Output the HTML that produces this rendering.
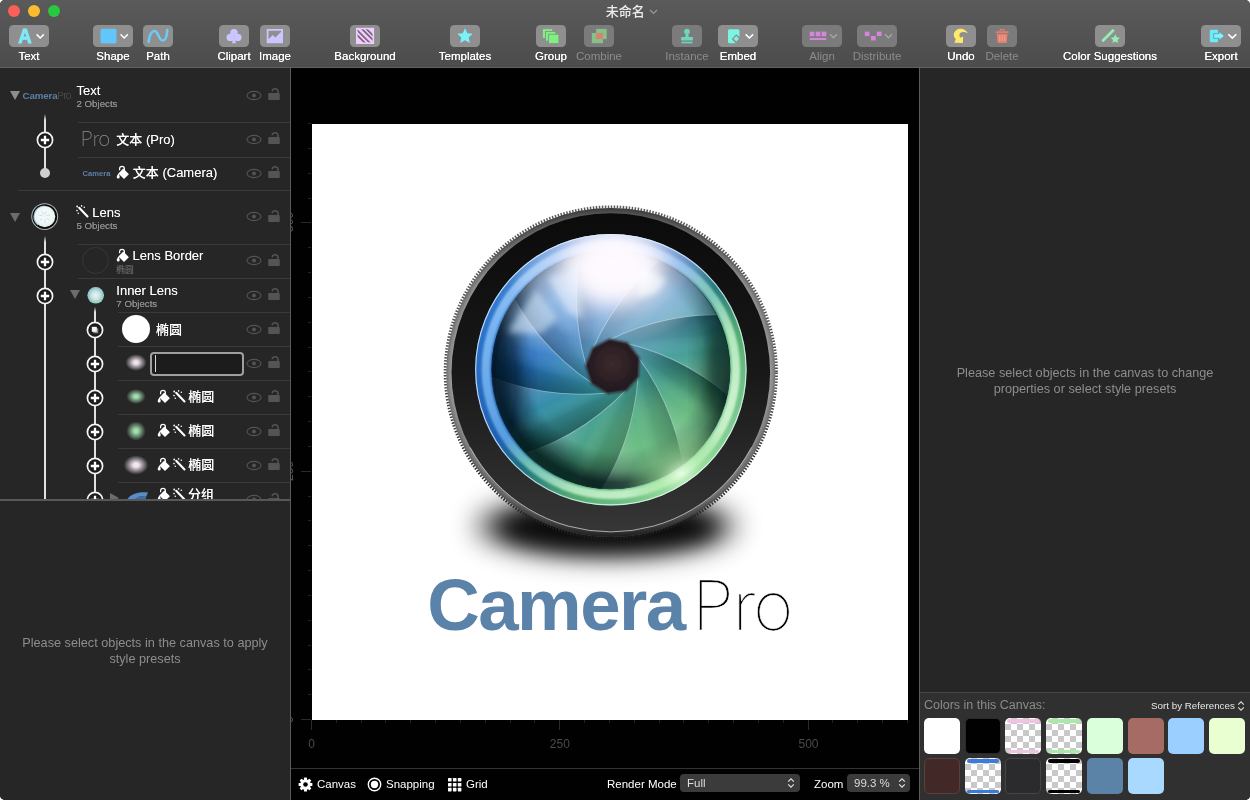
<!DOCTYPE html>
<html lang="zh">
<head>
<meta charset="utf-8">
<title>未命名</title>
<style>
*{box-sizing:border-box;margin:0;padding:0}
html,body{width:1250px;height:800px;overflow:hidden;background:#fff}
body{font-family:"Liberation Sans","Noto Sans CJK SC",sans-serif;font-size:12px;color:#fff;position:relative;-webkit-font-smoothing:antialiased}
.abs{position:absolute}
#win{position:absolute;left:0;top:0;width:1250px;height:800px;overflow:hidden;background:#000;border-radius:5px;opacity:.999}
/* toolbar */
#tb{position:absolute;left:0;top:0;width:1250px;height:67px;background:linear-gradient(#5a5a5a,#4c4c4c)}
#tbline{position:absolute;left:0;top:66.8px;width:1250px;height:1.1px;background:#606060}
.tl{position:absolute;top:5px;width:12px;height:12px;border-radius:50%}
.btn{position:absolute;top:25px;height:22px;border-radius:4.5px;background:#8f8f8f}
.btn.dis{background:#7b7b7b}
.lbl{position:absolute;top:49px;height:14px;line-height:14px;font-size:11.5px;color:#fff;text-align:center;white-space:nowrap;transform:translateX(-50%);text-shadow:0 0 .4px #fff}
.lbl.dis{color:#8c8c8c;text-shadow:none}
.btn svg{position:absolute;left:0;top:0}
#title{position:absolute;left:0;width:1250px;top:3px;height:18px;line-height:18px;text-align:center;font-size:13px;color:#ececec;padding-left:14px;font-weight:500}
/* left panel */
#left{position:absolute;left:0;top:68px;width:290px;height:732px;background:#262626}
#leftb{position:absolute;left:290px;top:68px;width:1px;height:732px;background:#5b5b5b}
#layers{position:absolute;left:0;top:0;width:290px;height:431px;overflow:hidden}
#ldiv{position:absolute;left:0;top:431.2px;width:290px;height:1.6px;background:#585858}
.sep{position:absolute;height:1px;background:#3a3a3a;right:0}
.t1{position:absolute;font-size:13px;line-height:16px;color:#fff;white-space:nowrap;font-weight:500;text-shadow:0 0 .5px rgba(255,255,255,.55)}
.t2{position:absolute;font-size:9.7px;line-height:11px;color:#8e8e8e;white-space:nowrap;text-shadow:0 0 .3px #8e8e8e}
.msg{position:absolute;color:#8d8d8d;font-size:12.7px;line-height:16px;text-align:center;white-space:nowrap}
/* canvas */
#cv{position:absolute;left:291px;top:68px;width:628px;height:732px;background:#000}
#paper{position:absolute;left:311.5px;top:123.5px;width:596px;height:596px;background:#fff;overflow:hidden}
#bbar{position:absolute;left:291px;top:768px;width:628px;height:1px;background:#333}
.bt{position:absolute;top:777px;height:15px;line-height:15px;font-size:11.5px;color:#fff;white-space:nowrap}
.rl{position:absolute;top:737px;height:15px;line-height:15px;font-size:12px;color:#4a4a4a;transform:translateX(-50%)}
.sel{position:absolute;top:774px;height:18px;border-radius:4px;background:#3b3b3b;color:#ddd;font-size:11.5px;line-height:18px}
/* right */
#right{position:absolute;left:920px;top:68px;width:330px;height:732px;background:#262626}
#rightb{position:absolute;left:919px;top:68px;width:1px;height:732px;background:#5b5b5b}
#colors{position:absolute;left:920px;top:692px;width:330px;height:108px;background:#303030;border-top:1px solid #484848}
.sw{position:absolute;width:36px;height:36px;border-radius:5px;overflow:hidden}
.chk{background-color:#fff;background-image:conic-gradient(#c9c9c9 25%,#fff 0 50%,#c9c9c9 0 75%,#fff 0);background-size:12px 12px;background-position:0 0}
</style>
</head>
<body>
<div id="win">
<!--TOOLBAR-->
<div id="tb">
<div class="tl" style="left:8px;background:#fc5f57"></div>
<div class="tl" style="left:28px;background:#fdbc2e"></div>
<div class="tl" style="left:48px;background:#28c840"></div>
<div id="title">未命名 <svg width="9" height="6" viewBox="0 0 9 6" style="vertical-align:1px;margin-left:1px"><path d="M1 1l3.5 3.5L8 1" fill="none" stroke="#9a9a9a" stroke-width="1.2"/></svg></div>

<div class="btn" style="left:9px;width:40px"><svg width="40" height="22"><text transform="translate(16 17.800) scale(.9 1.020)" x="0" y="0" font-family="Liberation Sans,sans-serif" font-weight="bold" font-size="20.600" text-anchor="middle" fill="#7eeaf6" stroke="#7eeaf6" stroke-width=".9" stroke-linejoin="round">A</text><path d="M27.6 9.4l3.6 3.6 3.6-3.6" fill="none" stroke="#fff" stroke-width="1.5"/></svg></div>
<div class="lbl" style="left:29px">Text</div>

<div class="btn" style="left:93px;width:40px"><svg width="40" height="22"><rect x="7.5" y="3.8" width="16" height="14.6" rx="1.5" fill="#62c6fb"/><path d="M27.6 9.4l3.6 3.6 3.6-3.6" fill="none" stroke="#fff" stroke-width="1.5"/></svg></div>
<div class="lbl" style="left:113px">Shape</div>

<div class="btn" style="left:143px;width:30px"><svg width="30" height="22"><path d="M5.6 17c.8-6 3-11 6-11 3.600 0 4 9.500 8 9.500 3 0 4.400-4.500 4.600-10.500" fill="none" stroke="#6ccaf6" stroke-width="2.600" stroke-linecap="round"/></svg></div>
<div class="lbl" style="left:158px">Path</div>

<div class="btn" style="left:219px;width:30px"><svg width="30" height="22"><g fill="#cbc6ff"><circle cx="15" cy="7.600" r="3.700"/><circle cx="11.200" cy="12.400" r="3.700"/><circle cx="18.800" cy="12.400" r="3.700"/><path d="M15 10l2 8.200h-4z"/></g></svg></div>
<div class="lbl" style="left:234px">Clipart</div>

<div class="btn" style="left:260px;width:30px"><svg width="30" height="22"><path d="M6.700 3.900h16.300v14.300h-16.300zM8.500 5.700v8.500l4.300-4.300 2.600 2.600 5.800-5.800v-1z" fill="#cbc6ff" fill-rule="evenodd"/></svg></div>
<div class="lbl" style="left:275px">Image</div>

<div class="btn" style="left:350px;width:30px"><svg width="30" height="22"><defs><clipPath id="bgc"><rect x="6.800" y="3.600" width="16.500" height="14.600"/></clipPath></defs><rect x="6.800" y="3.600" width="16.500" height="14.600" fill="#f1cdfb"/><g clip-path="url(#bgc)" stroke="#75657c" stroke-width="1.700"><path d="M9 1l16 16M5 3l16 16M13.500 1l12 12M4.500 7.500l13 13"/></g><rect x="6.800" y="3.600" width="16.500" height="14.600" fill="none" stroke="#f1cdfb" stroke-width="1.600"/></svg></div>
<div class="lbl" style="left:365px">Background</div>

<div class="btn" style="left:450px;width:30px"><svg width="30" height="22"><path d="M15 3.200l2.300 5 5.400.6-4 3.700 1.100 5.400-4.800-2.700-4.800 2.700 1.100-5.400-4-3.700 5.400-.6z" fill="#7af2fb"/></svg></div>
<div class="lbl" style="left:465px">Templates</div>

<div class="btn" style="left:536px;width:30px"><svg width="30" height="22"><g fill="#7ef27e" stroke="#8f8f8f" stroke-width=".9"><rect x="6.400" y="3.700" width="10.300" height="9.600"/><rect x="9.500" y="6.500" width="10.300" height="9.600"/><rect x="12.600" y="9.200" width="10.300" height="9.400"/></g></svg></div>
<div class="lbl" style="left:551px">Group</div>

<div class="btn dis" style="left:584px;width:30px"><svg width="30" height="22"><rect x="7.800" y="8" width="11.200" height="10.200" fill="#86c288"/><rect x="12.200" y="3.900" width="10.500" height="10.200" fill="#86c288"/><rect x="12.200" y="8" width="6.800" height="6.100" fill="#d98272"/></svg></div>
<div class="lbl dis" style="left:599px">Combine</div>

<div class="btn dis" style="left:672px;width:30px"><svg width="30" height="22"><g fill="#6fd5bd"><circle cx="15" cy="6.600" r="2.900"/><path d="M13.700 8h2.600l.5 4.500h-3.600z"/><rect x="9" y="12" width="12" height="3.600" rx="1"/><rect x="9.500" y="16.700" width="11" height="1.600"/></g></svg></div>
<div class="lbl dis" style="left:687px">Instance</div>

<div class="btn" style="left:718px;width:40px"><svg width="40" height="22"><path d="M11.500 4.200h8.500a1.500 1.500 0 0 1 1.500 1.500v6.300l-3.200-2.700-4.600 4.600 4 4.300h-6.200a1.500 1.500 0 0 1-1.500-1.500v-11a1.500 1.500 0 0 1 1.500-1.500z" fill="#7cf4e2"/><path d="M18.300 11.100l2.700 2.700-2.700 2.700-2.700-2.700z" fill="#7cf4e2"/><path d="M27.700 9.400l3.700 3.600 3.700-3.600" fill="none" stroke="#fff" stroke-width="1.500"/></svg></div>
<div class="lbl" style="left:738px">Embed</div>

<div class="btn dis" style="left:802px;width:40px"><svg width="40" height="22"><g fill="#d386dc"><rect x="7.700" y="6.600" width="4.700" height="4.700"/><rect x="13.700" y="6.600" width="4.700" height="4.700"/><rect x="19.600" y="6.600" width="4.700" height="4.700"/><rect x="7.700" y="13" width="16.600" height="2"/></g><path d="M28 9.300l3.500 3.500 3.500-3.500" fill="none" stroke="#a6a6a6" stroke-width="1.300"/></svg></div>
<div class="lbl dis" style="left:822px">Align</div>

<div class="btn dis" style="left:857px;width:40px"><svg width="40" height="22"><g fill="#d386dc"><rect x="7.800" y="6.600" width="4.700" height="4.500"/><rect x="14" y="11" width="4.700" height="4.500"/><rect x="19.800" y="6.600" width="4.700" height="4.500"/></g><path d="M28 9.300l3.500 3.500 3.500-3.500" fill="none" stroke="#a6a6a6" stroke-width="1.300"/></svg></div>
<div class="lbl dis" style="left:877px">Distribute</div>

<div class="btn" style="left:946px;width:30px"><svg width="30" height="22"><path d="M21.9 8.400C20.800 6 18.500 4.200 15.500 3.700C12 3.300 8.800 5.500 8 8.500C7.500 10.500 8 12.600 9.800 14.100L8.400 17.700L16.800 18L17.200 11.400L14.200 12.800C13 11 13 8.800 14.800 7.600C16.800 6.400 19.800 7 21.900 8.400Z" fill="#ffe96b"/></svg></div>
<div class="lbl" style="left:961px">Undo</div>

<div class="btn dis" style="left:987px;width:30px"><svg width="30" height="22"><g fill="#e37f6e"><rect x="8.8" y="6.3" width="12.7" height="1.9" rx=".5"/><path d="M12.6 6.300V5a1 1 0 0 1 1-1h3a1 1 0 0 1 1 1v1.300h-1.200v-1.100h-2.600v1.100z"/><path d="M9.800 9h10.700l-.6 8.200a.8.800 0 0 1-.8.700h-7.900a.8.800 0 0 1-.8-.7z"/></g><g stroke="#ee9c8d" stroke-width="1.300"><path d="M12.700 10.300v6M15.150 10.300v6M17.600 10.300v6"/></g></svg></div>
<div class="lbl dis" style="left:1002px">Delete</div>

<div class="btn" style="left:1095px;width:30px"><svg width="30" height="22"><path d="M7.300 16.200L18.800 4.800" stroke="#93f1b3" stroke-width="2.700" fill="none"/><path d="M20.300 9.300l1.400 3 3.200.4-2.400 2.200.7 3.200-2.900-1.600-2.900 1.600.7-3.200-2.400-2.200 3.200-.4z" fill="#93f1b3"/></svg></div>
<div class="lbl" style="left:1110px">Color Suggestions</div>

<div class="btn" style="left:1201px;width:40px"><svg width="40" height="22"><path d="M9.800 4.800h6.400a.8.800 0 0 1 .8.800v2.600h-4.600v5.400h4.600v2.800a.8.800 0 0 1-.8.800h-6.400a1 1 0 0 1-1-1v-10.400a1 1 0 0 1 1-1z" fill="#6ceafa"/><path d="M12.900 8.700h5.300v-2l5 4.200-5 4.200v-2h-5.300z" fill="#86f2fc" stroke="#3fa6b4" stroke-width=".5"/><path d="M27.300 9.200l4 3.900 4-3.900" fill="none" stroke="#fff" stroke-width="1.600"/></svg></div>
<div class="lbl" style="left:1221px">Export</div>
</div>
<div id="tbline"></div>
<!--/TOOLBAR-->
<!--LEFT-->
<div id="left"><div id="layers">
<div class="abs" style="left:44px;top:46px;width:2px;height:59px;background:linear-gradient(rgba(225,225,225,0),#e1e1e1 6px)"></div>
<div class="abs" style="left:44px;top:168px;width:2px;height:270px;background:linear-gradient(rgba(225,225,225,0),#e1e1e1 6px)"></div>
<div class="abs" style="left:94px;top:239px;width:2px;height:200px;background:linear-gradient(rgba(225,225,225,0),#e1e1e1 5px)"></div>
<svg class="abs" style="left:10px;top:22.7px" width="10" height="9"><path d="M0 0h10l-5 9z" fill="#8d8d8d"/></svg>
<div class="abs" style="left:22.500px;top:21px;font-size:9.700px;line-height:12px;white-space:nowrap;font-weight:bold;color:#5d80a5;letter-spacing:-.1px">Camera<span style="font-family:'Noto Sans CJK SC','Liberation Sans',sans-serif;font-weight:100;color:#7a7a7a;letter-spacing:-.3px">Pro</span></div>
<div class="t1" style="left:76.5px;top:15.1px">Text</div>
<div class="t2" style="left:76.5px;top:29.8px;">2 Objects</div>
<svg class="abs" style="left:246px;top:21.5px" width="16" height="11"><ellipse cx="8" cy="5.5" rx="7" ry="4.1" fill="none" stroke="#545454" stroke-width="1.1"/><circle cx="8" cy="5.5" r="1.9" fill="#545454"/></svg>
<svg class="abs" style="left:267px;top:19.0px" width="14" height="14"><rect x="1.2" y="6" width="11.6" height="7" rx="1" fill="#545454"/><path d="M5.2 4.300C5.200 .8 11 .8 11 4.300V6.500" fill="none" stroke="#545454" stroke-width="1.500"/></svg>
<div class="sep" style="top:54.0px;left:78px"></div>
<svg class="abs" style="left:35px;top:62.0px" width="20" height="20"><circle cx="10" cy="10" r="7.600" fill="#1b1b1b" stroke="#f4f4f4" stroke-width="1.700"/><path d="M10 5.800v8.400M5.800 10h8.400" stroke="#fff" stroke-width="2.300"/></svg>
<div class="abs" style="left:80.500px;top:57px;font-family:'Noto Sans CJK SC','Liberation Sans',sans-serif;font-weight:100;font-size:20.500px;line-height:24px;color:#8a8a8a;letter-spacing:-.6px">Pro</div>
<div class="t1" style="left:116.3px;top:63.5px">文本 (Pro)</div>
<svg class="abs" style="left:246px;top:65.7px" width="16" height="11"><ellipse cx="8" cy="5.5" rx="7" ry="4.1" fill="none" stroke="#545454" stroke-width="1.1"/><circle cx="8" cy="5.5" r="1.9" fill="#545454"/></svg>
<svg class="abs" style="left:267px;top:63.2px" width="14" height="14"><rect x="1.2" y="6" width="11.6" height="7" rx="1" fill="#545454"/><path d="M5.2 4.300C5.200 .8 11 .8 11 4.300V6.500" fill="none" stroke="#545454" stroke-width="1.500"/></svg>
<div class="sep" style="top:88.5px;left:78px"></div>
<div class="abs" style="left:42.500px;top:102.400px;width:5px;height:5px"></div>
<div class="abs" style="left:39.700px;top:99.600px;width:10.600px;height:10.600px;border-radius:50%;background:#cfcfcf"></div>
<div class="abs" style="left:82.500px;top:100.500px;font-size:7.600px;line-height:10px;font-weight:bold;color:#5d80a5;white-space:nowrap">Camera</div>
<svg class="abs" style="left:116.3px;top:96.8px" width="14" height="15" viewBox="0 0 14 15"><path d="M3.600 5.300V3.800a2.400 2.400 0 0 1 4.800 0v1.200" fill="none" stroke="#fff" stroke-width="1.200"/><path d="M7.300 3.600l5.600 5.600-4.900 4.900-5.600-5.600z" fill="#fff"/><path d="M2.700 8.200c-1 1.500-2 2.700-2 3.700a1.500 1.500 0 0 0 3 0c0-1-.6-2.200-1-3.700z" fill="#fff"/></svg>
<div class="t1" style="left:132.8px;top:97.2px">文本 (Camera)</div>
<svg class="abs" style="left:246px;top:99.5px" width="16" height="11"><ellipse cx="8" cy="5.5" rx="7" ry="4.1" fill="none" stroke="#545454" stroke-width="1.1"/><circle cx="8" cy="5.5" r="1.9" fill="#545454"/></svg>
<svg class="abs" style="left:267px;top:97.0px" width="14" height="14"><rect x="1.2" y="6" width="11.6" height="7" rx="1" fill="#545454"/><path d="M5.2 4.300C5.200 .8 11 .8 11 4.300V6.500" fill="none" stroke="#545454" stroke-width="1.500"/></svg>
<div class="sep" style="top:121.7px;left:18px"></div>
<svg class="abs" style="left:10.2px;top:144.5px" width="10" height="9"><path d="M0 0h10l-5 9z" fill="#6c6c6c"/></svg>
<svg class="abs" style="left:30px;top:134px" width="30" height="30" viewBox="0 0 30 30"><defs><radialGradient id="lt" cx=".5" cy=".45" r=".55"><stop offset="0" stop-color="#eaf2f6"/><stop offset=".3" stop-color="#f4fafc"/><stop offset=".8" stop-color="#eaf5f2"/><stop offset="1" stop-color="#d2ead8"/></radialGradient></defs><circle cx="14.700" cy="14.600" r="13.400" fill="#b4b4b4"/><circle cx="14.700" cy="14.600" r="12.400" fill="#080808"/><circle cx="14.700" cy="14.600" r="10.600" fill="url(#lt)"/><path d="M14.700 4A10.600 10.600 0 0 0 8.200 23" fill="none" stroke="#a9d3f4" stroke-opacity=".8" stroke-width="1.100"/><g stroke="#9fb9c6" stroke-opacity=".5" stroke-width=".9" fill="none"><path d="M14.700 12.200l1.600-2.600M17 13.600l2.900-.8M17 16.200l2.300 2M14.900 17.200l.2 3M12.400 16.400l-2.400 1.800M12 13.800l-3-.6M13.300 12.200l-1.300-2.600"/></g></svg>
<svg class="abs" style="left:76.3px;top:137.3px" width="13" height="13" viewBox="0 0 13 13"><path d="M3.200 2.800l8.300 8.600" stroke="#fff" stroke-width="2.100" stroke-linecap="round"/><g fill="#fff"><circle cx="1.200" cy="1.500" r=".9"/><circle cx="5.600" cy=".9" r=".8"/><circle cx="8.300" cy="2.300" r=".8"/><circle cx="1" cy="5.600" r=".8"/><circle cx="2.300" cy="8.200" r=".8"/></g></svg>
<div class="t1" style="left:92.3px;top:137.0px">Lens</div>
<div class="t2" style="left:76.5px;top:152.0px;">5 Objects</div>
<svg class="abs" style="left:246px;top:143.2px" width="16" height="11"><ellipse cx="8" cy="5.5" rx="7" ry="4.1" fill="none" stroke="#545454" stroke-width="1.1"/><circle cx="8" cy="5.5" r="1.9" fill="#545454"/></svg>
<svg class="abs" style="left:267px;top:140.7px" width="14" height="14"><rect x="1.2" y="6" width="11.6" height="7" rx="1" fill="#545454"/><path d="M5.2 4.300C5.200 .8 11 .8 11 4.300V6.500" fill="none" stroke="#545454" stroke-width="1.500"/></svg>
<div class="sep" style="top:176.0px;left:78px"></div>
<svg class="abs" style="left:35px;top:184.0px" width="20" height="20"><circle cx="10" cy="10" r="7.600" fill="#1b1b1b" stroke="#f4f4f4" stroke-width="1.700"/><path d="M10 5.800v8.400M5.800 10h8.400" stroke="#fff" stroke-width="2.300"/></svg>
<div class="abs" style="left:82.300px;top:179.400px;width:27px;height:27px;border-radius:50%;border:1px solid #383838"></div>
<svg class="abs" style="left:116.3px;top:179.8px" width="14" height="15" viewBox="0 0 14 15"><path d="M3.600 5.300V3.800a2.400 2.400 0 0 1 4.800 0v1.200" fill="none" stroke="#fff" stroke-width="1.200"/><path d="M7.300 3.600l5.600 5.600-4.900 4.900-5.600-5.600z" fill="#fff"/><path d="M2.700 8.200c-1 1.500-2 2.700-2 3.700a1.500 1.500 0 0 0 3 0c0-1-.6-2.200-1-3.700z" fill="#fff"/></svg>
<div class="t1" style="left:132.6px;top:180.4px">Lens Border</div>
<div class="abs" style="left:116.300px;top:196.5px;font-size:8.800px;line-height:11px;color:#777">椭圆</div>
<svg class="abs" style="left:246px;top:187.3px" width="16" height="11"><ellipse cx="8" cy="5.5" rx="7" ry="4.1" fill="none" stroke="#545454" stroke-width="1.1"/><circle cx="8" cy="5.5" r="1.9" fill="#545454"/></svg>
<svg class="abs" style="left:267px;top:184.8px" width="14" height="14"><rect x="1.2" y="6" width="11.6" height="7" rx="1" fill="#545454"/><path d="M5.2 4.300C5.200 .8 11 .8 11 4.300V6.500" fill="none" stroke="#545454" stroke-width="1.500"/></svg>
<div class="sep" style="top:210.1px;left:78px"></div>
<svg class="abs" style="left:35px;top:218.0px" width="20" height="20"><circle cx="10" cy="10" r="7.600" fill="#1b1b1b" stroke="#f4f4f4" stroke-width="1.700"/><path d="M10 5.800v8.400M5.800 10h8.400" stroke="#fff" stroke-width="2.300"/></svg>
<svg class="abs" style="left:70.2px;top:222.4px" width="10" height="9"><path d="M0 0h10l-5 9z" fill="#6c6c6c"/></svg>
<svg class="abs" style="left:86px;top:217px" width="20" height="20" viewBox="0 0 20 20"><defs><radialGradient id="lt2" cx=".5" cy=".5" r=".5"><stop offset="0" stop-color="#e8f2f6"/><stop offset=".5" stop-color="#cfe6ea"/><stop offset=".85" stop-color="#a8d4c0"/><stop offset="1" stop-color="#8fc3e6"/></radialGradient><linearGradient id="lt3" x1="0" y1="0" x2="1" y2="1"><stop offset="0" stop-color="#8ab8f0"/><stop offset="1" stop-color="#a4e0a8"/></linearGradient></defs><circle cx="9.700" cy="10.300" r="8.300" fill="url(#lt3)"/><circle cx="9.700" cy="10.300" r="7.200" fill="url(#lt2)"/></svg>
<div class="t1" style="left:116.3px;top:215.4px">Inner Lens</div>
<div class="t2" style="left:116.3px;top:230.3px;">7 Objects</div>
<svg class="abs" style="left:246px;top:221.5px" width="16" height="11"><ellipse cx="8" cy="5.5" rx="7" ry="4.1" fill="none" stroke="#545454" stroke-width="1.1"/><circle cx="8" cy="5.5" r="1.9" fill="#545454"/></svg>
<svg class="abs" style="left:267px;top:219.0px" width="14" height="14"><rect x="1.2" y="6" width="11.6" height="7" rx="1" fill="#545454"/><path d="M5.2 4.300C5.200 .8 11 .8 11 4.300V6.500" fill="none" stroke="#545454" stroke-width="1.500"/></svg>
<div class="sep" style="top:243.9px;left:118px"></div>
<svg class="abs" style="left:85px;top:251.8px" width="20" height="20"><circle cx="10" cy="10" r="7.600" fill="#1b1b1b" stroke="#f4f4f4" stroke-width="1.700"/><rect x="8.300" y="8.300" width="5" height="5" fill="#8a8a8a"/><rect x="6.800" y="6.800" width="5" height="5" fill="#f4f4f4"/></svg>
<div class="abs" style="left:122px;top:247.200px;width:28px;height:28px;border-radius:50%;background:#fff"></div>
<div class="t1" style="left:156px;top:253.6px">椭圆</div>
<svg class="abs" style="left:246px;top:255.5px" width="16" height="11"><ellipse cx="8" cy="5.5" rx="7" ry="4.1" fill="none" stroke="#545454" stroke-width="1.1"/><circle cx="8" cy="5.5" r="1.9" fill="#545454"/></svg>
<svg class="abs" style="left:267px;top:253.0px" width="14" height="14"><rect x="1.2" y="6" width="11.6" height="7" rx="1" fill="#545454"/><path d="M5.2 4.300C5.200 .8 11 .8 11 4.300V6.500" fill="none" stroke="#545454" stroke-width="1.500"/></svg>
<div class="sep" style="top:278.1px;left:118px"></div>
<svg class="abs" style="left:85px;top:285.8px" width="20" height="20"><circle cx="10" cy="10" r="7.600" fill="#1b1b1b" stroke="#f4f4f4" stroke-width="1.700"/><path d="M10 5.800v8.400M5.800 10h8.400" stroke="#fff" stroke-width="2.300"/></svg>
<div class="abs" style="left:123.6px;top:285.3px;width:24px;height:19.0px;background:radial-gradient(closest-side,#efe2ec 0%,#efe2ec 18%,transparent 88%);opacity:1"></div>
<div class="abs" style="left:150.100px;top:284px;width:93.500px;height:24px;border:2.700px solid #a0a0a0;border-radius:4px;background:#1c1c1c"><div class="abs" style="left:2.600px;top:1.200px;width:1px;height:16.500px;background:#d8d8d8"></div></div>
<svg class="abs" style="left:246px;top:289.5px" width="16" height="11"><ellipse cx="8" cy="5.5" rx="7" ry="4.1" fill="none" stroke="#545454" stroke-width="1.1"/><circle cx="8" cy="5.5" r="1.9" fill="#545454"/></svg>
<svg class="abs" style="left:267px;top:287.0px" width="14" height="14"><rect x="1.2" y="6" width="11.6" height="7" rx="1" fill="#545454"/><path d="M5.2 4.300C5.200 .8 11 .8 11 4.300V6.500" fill="none" stroke="#545454" stroke-width="1.500"/></svg>
<div class="sep" style="top:311.9px;left:118px"></div>
<svg class="abs" style="left:85px;top:319.8px" width="20" height="20"><circle cx="10" cy="10" r="7.600" fill="#1b1b1b" stroke="#f4f4f4" stroke-width="1.700"/><path d="M10 5.800v8.400M5.800 10h8.400" stroke="#fff" stroke-width="2.300"/></svg>
<div class="abs" style="left:124.6px;top:320.3px;width:22px;height:17.0px;background:radial-gradient(closest-side,#9fdcae 0%,#9fdcae 18%,transparent 88%);opacity:1"></div>
<svg class="abs" style="left:156.6px;top:321.0px" width="14" height="15" viewBox="0 0 14 15"><path d="M3.600 5.300V3.800a2.400 2.400 0 0 1 4.800 0v1.200" fill="none" stroke="#fff" stroke-width="1.200"/><path d="M7.300 3.600l5.600 5.600-4.900 4.900-5.600-5.600z" fill="#fff"/><path d="M2.700 8.200c-1 1.500-2 2.700-2 3.700a1.500 1.500 0 0 0 3 0c0-1-.6-2.200-1-3.700z" fill="#fff"/></svg>
<svg class="abs" style="left:172.6px;top:322.3px" width="13" height="13" viewBox="0 0 13 13"><path d="M3.200 2.800l8.300 8.600" stroke="#fff" stroke-width="2.100" stroke-linecap="round"/><g fill="#fff"><circle cx="1.200" cy="1.500" r=".9"/><circle cx="5.600" cy=".9" r=".8"/><circle cx="8.300" cy="2.300" r=".8"/><circle cx="1" cy="5.600" r=".8"/><circle cx="2.300" cy="8.200" r=".8"/></g></svg>
<div class="t1" style="left:188.2px;top:321.4px">椭圆</div>
<svg class="abs" style="left:246px;top:323.5px" width="16" height="11"><ellipse cx="8" cy="5.5" rx="7" ry="4.1" fill="none" stroke="#545454" stroke-width="1.1"/><circle cx="8" cy="5.5" r="1.9" fill="#545454"/></svg>
<svg class="abs" style="left:267px;top:321.0px" width="14" height="14"><rect x="1.2" y="6" width="11.6" height="7" rx="1" fill="#545454"/><path d="M5.2 4.300C5.200 .8 11 .8 11 4.300V6.500" fill="none" stroke="#545454" stroke-width="1.500"/></svg>
<div class="sep" style="top:345.9px;left:118px"></div>
<svg class="abs" style="left:85px;top:353.7px" width="20" height="20"><circle cx="10" cy="10" r="7.600" fill="#1b1b1b" stroke="#f4f4f4" stroke-width="1.700"/><path d="M10 5.800v8.400M5.800 10h8.400" stroke="#fff" stroke-width="2.300"/></svg>
<div class="abs" style="left:124.6px;top:351.8px;width:22px;height:22px;background:radial-gradient(closest-side,#9fdcae 0%,#9fdcae 18%,transparent 88%);opacity:1"></div>
<svg class="abs" style="left:156.6px;top:354.9px" width="14" height="15" viewBox="0 0 14 15"><path d="M3.600 5.300V3.800a2.400 2.400 0 0 1 4.800 0v1.200" fill="none" stroke="#fff" stroke-width="1.200"/><path d="M7.300 3.600l5.600 5.600-4.900 4.900-5.600-5.600z" fill="#fff"/><path d="M2.700 8.200c-1 1.500-2 2.700-2 3.700a1.500 1.500 0 0 0 3 0c0-1-.6-2.200-1-3.700z" fill="#fff"/></svg>
<svg class="abs" style="left:172.6px;top:356.2px" width="13" height="13" viewBox="0 0 13 13"><path d="M3.200 2.800l8.300 8.600" stroke="#fff" stroke-width="2.100" stroke-linecap="round"/><g fill="#fff"><circle cx="1.200" cy="1.500" r=".9"/><circle cx="5.600" cy=".9" r=".8"/><circle cx="8.300" cy="2.300" r=".8"/><circle cx="1" cy="5.600" r=".8"/><circle cx="2.300" cy="8.200" r=".8"/></g></svg>
<div class="t1" style="left:188.2px;top:355.3px">椭圆</div>
<svg class="abs" style="left:246px;top:357.5px" width="16" height="11"><ellipse cx="8" cy="5.5" rx="7" ry="4.1" fill="none" stroke="#545454" stroke-width="1.1"/><circle cx="8" cy="5.5" r="1.9" fill="#545454"/></svg>
<svg class="abs" style="left:267px;top:355.0px" width="14" height="14"><rect x="1.2" y="6" width="11.6" height="7" rx="1" fill="#545454"/><path d="M5.2 4.300C5.200 .8 11 .8 11 4.300V6.500" fill="none" stroke="#545454" stroke-width="1.500"/></svg>
<div class="sep" style="top:379.8px;left:118px"></div>
<svg class="abs" style="left:85px;top:387.8px" width="20" height="20"><circle cx="10" cy="10" r="7.600" fill="#1b1b1b" stroke="#f4f4f4" stroke-width="1.700"/><path d="M10 5.800v8.400M5.800 10h8.400" stroke="#fff" stroke-width="2.300"/></svg>
<div class="abs" style="left:122px;top:386.0px;width:28px;height:22px;background:radial-gradient(closest-side,#f3e6f0 0%,#f3e6f0 18%,transparent 88%);opacity:1"></div>
<svg class="abs" style="left:156.6px;top:388.9px" width="14" height="15" viewBox="0 0 14 15"><path d="M3.600 5.300V3.800a2.400 2.400 0 0 1 4.800 0v1.200" fill="none" stroke="#fff" stroke-width="1.200"/><path d="M7.300 3.600l5.600 5.600-4.900 4.900-5.600-5.600z" fill="#fff"/><path d="M2.700 8.200c-1 1.500-2 2.700-2 3.700a1.500 1.500 0 0 0 3 0c0-1-.6-2.200-1-3.700z" fill="#fff"/></svg>
<svg class="abs" style="left:172.6px;top:390.2px" width="13" height="13" viewBox="0 0 13 13"><path d="M3.200 2.800l8.300 8.600" stroke="#fff" stroke-width="2.100" stroke-linecap="round"/><g fill="#fff"><circle cx="1.200" cy="1.500" r=".9"/><circle cx="5.600" cy=".9" r=".8"/><circle cx="8.300" cy="2.300" r=".8"/><circle cx="1" cy="5.600" r=".8"/><circle cx="2.300" cy="8.200" r=".8"/></g></svg>
<div class="t1" style="left:188.2px;top:389.3px">椭圆</div>
<svg class="abs" style="left:246px;top:391.5px" width="16" height="11"><ellipse cx="8" cy="5.5" rx="7" ry="4.1" fill="none" stroke="#545454" stroke-width="1.1"/><circle cx="8" cy="5.5" r="1.9" fill="#545454"/></svg>
<svg class="abs" style="left:267px;top:389.0px" width="14" height="14"><rect x="1.2" y="6" width="11.6" height="7" rx="1" fill="#545454"/><path d="M5.2 4.300C5.200 .8 11 .8 11 4.300V6.500" fill="none" stroke="#545454" stroke-width="1.500"/></svg>
<div class="sep" style="top:413.8px;left:118px"></div>
<svg class="abs" style="left:85px;top:421.6px" width="20" height="20"><circle cx="10" cy="10" r="7.600" fill="#1b1b1b" stroke="#f4f4f4" stroke-width="1.700"/><path d="M10 5.800v8.400M5.800 10h8.400" stroke="#fff" stroke-width="2.300"/></svg>
<svg class="abs" style="left:110px;top:425px" width="9" height="10"><path d="M0 0l9 5-9 5z" fill="#6c6c6c"/></svg>
<svg class="abs" style="left:126px;top:422px" width="24" height="16" viewBox="0 0 24 16"><path d="M1 9.500C5 4 12 1.500 22 2.500L20.500 6c-6-.5-9.500 1-12.500 4.500z" fill="#5a8cc8"/><path d="M8 10c3-3.500 6.500-4.500 12.500-4l-1 3.500c-4 0-6 1-8 3z" fill="#3f6ea8"/></svg>
<svg class="abs" style="left:156.6px;top:418.9px" width="14" height="15" viewBox="0 0 14 15"><path d="M3.600 5.300V3.800a2.400 2.400 0 0 1 4.800 0v1.200" fill="none" stroke="#fff" stroke-width="1.200"/><path d="M7.300 3.600l5.600 5.600-4.900 4.900-5.600-5.600z" fill="#fff"/><path d="M2.700 8.200c-1 1.500-2 2.700-2 3.700a1.500 1.500 0 0 0 3 0c0-1-.6-2.200-1-3.700z" fill="#fff"/></svg>
<svg class="abs" style="left:172.6px;top:420.2px" width="13" height="13" viewBox="0 0 13 13"><path d="M3.200 2.800l8.300 8.600" stroke="#fff" stroke-width="2.100" stroke-linecap="round"/><g fill="#fff"><circle cx="1.200" cy="1.500" r=".9"/><circle cx="5.600" cy=".9" r=".8"/><circle cx="8.300" cy="2.300" r=".8"/><circle cx="1" cy="5.600" r=".8"/><circle cx="2.300" cy="8.200" r=".8"/></g></svg>
<div class="t1" style="left:188px;top:419.3px">分组</div>
<svg class="abs" style="left:246px;top:426.3px" width="16" height="11"><ellipse cx="8" cy="5.5" rx="7" ry="4.1" fill="none" stroke="#545454" stroke-width="1.1"/><circle cx="8" cy="5.5" r="1.9" fill="#545454"/></svg>
<svg class="abs" style="left:267px;top:423.8px" width="14" height="14"><rect x="1.2" y="6" width="11.6" height="7" rx="1" fill="#545454"/><path d="M5.2 4.300C5.200 .8 11 .8 11 4.300V6.500" fill="none" stroke="#545454" stroke-width="1.500"/></svg>
</div>
<div id="ldiv"></div>
<div class="msg" style="left:0;width:290px;top:566.8px">Please select objects in the canvas to apply<br>style presets</div>
</div><div id="leftb"></div>
<!--/LEFT-->
<!--CANVAS-->
<div id="cv"></div>
<div id="paper">
<!--LENS-->
<svg class="abs" style="left:0;top:0" width="596" height="596" viewBox="0 0 596 596">
<defs>
<filter id="b1" x="-20%" y="-20%" width="140%" height="140%"><feGaussianBlur stdDeviation="1.2"/></filter>
<filter id="b3" x="-30%" y="-30%" width="160%" height="160%"><feGaussianBlur stdDeviation="3"/></filter>
<filter id="b6" x="-50%" y="-50%" width="200%" height="200%"><feGaussianBlur stdDeviation="6"/></filter>
<filter id="b10" x="-50%" y="-80%" width="200%" height="260%"><feGaussianBlur stdDeviation="10"/></filter>
<filter id="b14" x="-60%" y="-60%" width="220%" height="220%"><feGaussianBlur stdDeviation="14"/></filter>
<clipPath id="cg"><circle cx="298.85" cy="245.7" r="135.8"/></clipPath>
<clipPath id="ci"><circle cx="298.85" cy="245.7" r="119"/></clipPath>
<radialGradient id="band" gradientUnits="userSpaceOnUse" cx="298.8" cy="248.5" r="165"><stop offset=".962" stop-color="#a2a2a2"/><stop offset=".985" stop-color="#858585"/><stop offset="1" stop-color="#6c6c6c"/></radialGradient>
<linearGradient id="bandv" x1="0" y1="0" x2="0" y2="1"><stop offset="0" stop-color="#000" stop-opacity=".5"/><stop offset=".22" stop-color="#000" stop-opacity=".08"/><stop offset=".55" stop-color="#000" stop-opacity="0"/><stop offset=".88" stop-color="#000" stop-opacity=".25"/><stop offset="1" stop-color="#000" stop-opacity=".75"/></linearGradient>
<linearGradient id="barrel" x1="0" y1="0" x2="0" y2="1"><stop offset="0" stop-color="#0b0b0b"/><stop offset=".5" stop-color="#181818"/><stop offset="1" stop-color="#363636"/></linearGradient>
<linearGradient id="teeth" x1="0" y1="0" x2="0" y2="1"><stop offset="0" stop-color="#5a5a5a"/><stop offset=".5" stop-color="#4c4c4c"/><stop offset="1" stop-color="#1e1e1e"/></linearGradient>
<linearGradient id="gcol" x1=".2" y1=".05" x2=".8" y2=".95"><stop offset="0" stop-color="#4a92e4"/><stop offset=".3" stop-color="#2474c6"/><stop offset=".52" stop-color="#3696a4"/><stop offset=".78" stop-color="#56b07a"/><stop offset="1" stop-color="#78cc86"/></linearGradient>
<linearGradient id="rcol" x1=".13" y1=".13" x2=".87" y2=".87"><stop offset="0" stop-color="#2f78d0"/><stop offset=".4" stop-color="#1f60b0"/><stop offset=".52" stop-color="#1f7280"/><stop offset=".72" stop-color="#52aa70"/><stop offset="1" stop-color="#8ad49a"/></linearGradient>
<linearGradient id="rhi" x1=".13" y1=".13" x2=".87" y2=".87"><stop offset="0" stop-color="#8cc4fa"/><stop offset=".4" stop-color="#62a8ea"/><stop offset=".52" stop-color="#7ccac0"/><stop offset=".72" stop-color="#c0f0ca"/><stop offset="1" stop-color="#e4fee0"/></linearGradient>
<linearGradient id="bl" gradientUnits="userSpaceOnUse" x1="24" y1="70" x2="-42" y2="42"><stop offset="0" stop-color="#00101c" stop-opacity=".50"/><stop offset=".35" stop-color="#00101c" stop-opacity=".18"/><stop offset=".6" stop-color="#fff" stop-opacity=".02"/><stop offset="1" stop-color="#fff" stop-opacity=".26"/></linearGradient>
<radialGradient id="hole" cx=".5" cy=".45" r=".55"><stop offset="0" stop-color="#3b2a2d"/><stop offset=".6" stop-color="#2c2024"/><stop offset="1" stop-color="#1c1820"/></radialGradient>
<radialGradient id="wg" cx=".5" cy=".5" r=".5"><stop offset="0" stop-color="#fff" stop-opacity=".95"/><stop offset=".4" stop-color="#f6f2ff" stop-opacity=".7"/><stop offset=".75" stop-color="#eef0ff" stop-opacity=".3"/><stop offset="1" stop-color="#fff" stop-opacity="0"/></radialGradient>
<radialGradient id="gg" cx=".5" cy=".5" r=".5"><stop offset="0" stop-color="#e8ffe4" stop-opacity=".95"/><stop offset=".4" stop-color="#a8e8a0" stop-opacity=".55"/><stop offset="1" stop-color="#7fd080" stop-opacity="0"/></radialGradient>
<radialGradient id="vig" cx=".52" cy=".47" r=".5"><stop offset="0" stop-color="#021018" stop-opacity="0"/><stop offset=".74" stop-color="#021018" stop-opacity=".03"/><stop offset=".9" stop-color="#021018" stop-opacity=".38"/><stop offset="1" stop-color="#021018" stop-opacity=".8"/></radialGradient>
<path id="blade" d="M25.3 9.2A250 250 0 0 1 -8.4 125.7A126 126 0 0 1 -87.3 90.9A250 250 0 0 0 25.3 9.2Z"/>
<path id="bedge" d="M25.3 -9.2A250 250 0 0 1 -8.4 125.7"/>
</defs>
<ellipse cx="294" cy="402" rx="130" ry="31" fill="#000" opacity=".72" filter="url(#b14)"/>
<ellipse cx="296" cy="404" rx="108" ry="24" fill="#000" opacity=".85" filter="url(#b10)"/>
<circle cx="298.8" cy="248.5" r="165.6" fill="none" stroke="url(#teeth)" stroke-width="3" stroke-dasharray="1.5 1.5"/>
<circle cx="298.8" cy="248.5" r="164.6" fill="url(#band)"/>
<circle cx="298.8" cy="248.5" r="164.6" fill="url(#bandv)"/>
<circle cx="298.8" cy="248.5" r="159.3" fill="url(#barrel)"/>
<path d="M158.1 323.3A159.3 159.3 0 0 0 439.5 323.3" fill="none" stroke="#c8c8c8" stroke-width="1" stroke-opacity=".8"/>
<circle cx="298.85" cy="245.7" r="135.8" fill="url(#rcol)"/>
<circle cx="298.85" cy="245.7" r="125" fill="none" stroke="url(#rhi)" stroke-width="8.500" stroke-opacity=".85" filter="url(#b1)"/>
<circle cx="298.85" cy="245.7" r="119.5" fill="#06202c"/>
<g clip-path="url(#ci)">
<circle cx="298.85" cy="245.7" r="119" fill="url(#gcol)"/>
<g transform="translate(301.1 242.5) rotate(2)">
<use href="#blade" fill="url(#bl)" transform="rotate(0)"/>
<use href="#blade" fill="url(#bl)" transform="rotate(40)"/>
<use href="#blade" fill="url(#bl)" transform="rotate(80)"/>
<use href="#blade" fill="url(#bl)" transform="rotate(120)"/>
<use href="#blade" fill="url(#bl)" transform="rotate(160)"/>
<use href="#blade" fill="url(#bl)" transform="rotate(200)"/>
<use href="#blade" fill="url(#bl)" transform="rotate(240)"/>
<use href="#blade" fill="url(#bl)" transform="rotate(280)"/>
<use href="#blade" fill="url(#bl)" transform="rotate(320)"/>
<use href="#bedge" fill="none" stroke="#dff6ff" stroke-opacity=".42" stroke-width="1" transform="rotate(0)"/>
<use href="#bedge" fill="none" stroke="#dff6ff" stroke-opacity=".42" stroke-width="1" transform="rotate(40)"/>
<use href="#bedge" fill="none" stroke="#dff6ff" stroke-opacity=".42" stroke-width="1" transform="rotate(80)"/>
<use href="#bedge" fill="none" stroke="#dff6ff" stroke-opacity=".42" stroke-width="1" transform="rotate(120)"/>
<use href="#bedge" fill="none" stroke="#dff6ff" stroke-opacity=".42" stroke-width="1" transform="rotate(160)"/>
<use href="#bedge" fill="none" stroke="#dff6ff" stroke-opacity=".42" stroke-width="1" transform="rotate(200)"/>
<use href="#bedge" fill="none" stroke="#dff6ff" stroke-opacity=".42" stroke-width="1" transform="rotate(240)"/>
<use href="#bedge" fill="none" stroke="#dff6ff" stroke-opacity=".42" stroke-width="1" transform="rotate(280)"/>
<use href="#bedge" fill="none" stroke="#dff6ff" stroke-opacity=".42" stroke-width="1" transform="rotate(320)"/>
</g>
<circle cx="298.85" cy="245.7" r="120" fill="url(#vig)"/>
<ellipse cx="192.85000000000002" cy="257.7" rx="16" ry="62" fill="#04182a" opacity=".7" filter="url(#b10)"/>
<ellipse cx="406.85" cy="253.7" rx="15" ry="58" fill="#031c14" opacity=".7" filter="url(#b10)"/>
<ellipse cx="236.85000000000002" cy="337.7" rx="40" ry="14" fill="#06281c" opacity=".6" filter="url(#b10)" transform="rotate(38 236.85000000000002 337.7)"/>
</g>
<g clip-path="url(#cg)">
<ellipse cx="288.85" cy="183.7" rx="92" ry="58" fill="#e4ecf8" opacity=".28" filter="url(#b14)"/>
<ellipse cx="300.5" cy="140" rx="108" ry="80" fill="url(#wg)" opacity=".95"/>
<ellipse cx="302" cy="143" rx="46" ry="36" fill="#fffaff" opacity=".95" filter="url(#b10)"/>
<path d="M195.5 208.5L224.5 165.5L245.5 194.5L229.5 209.5Z" fill="#dcebfa" opacity=".55" filter="url(#b3)"/>
<path d="M235.5 153.5L266.5 144.5L270.5 194.5L255.5 188.5Z" fill="#eef4ff" opacity=".5" filter="url(#b3)"/>
<path d="M328.5 143.5L354.5 155.5L344.5 169.5L325.5 173.5Z" fill="#fff" opacity=".6" filter="url(#b3)"/>
<ellipse cx="353.85" cy="317.7" rx="62" ry="52" fill="#8fd89a" opacity=".30" filter="url(#b14)"/>
<ellipse cx="368.85" cy="349.7" rx="60" ry="40" fill="url(#gg)" transform="rotate(-32 368.85 349.7)"/>
<path d="M326.1 252.6L313.8 266.3L295.5 268.9L279.9 259.1L274.2 241.6L281.1 224.5L297.3 215.8L315.4 219.6L326.7 234.2Z" fill="url(#hole)" stroke="#2c2226" stroke-width="2" stroke-linejoin="round" filter="url(#b1)"/>
</g>
<circle cx="298.85" cy="245.7" r="135.2" fill="none" stroke="#e6f4ff" stroke-opacity=".8" stroke-width="1.1"/>
</svg>
<!--/LENS-->
<div class="abs" style="left:0;top:0;width:596px;height:596px">
<div class="abs" id="cam" style="left:115.800px;top:441.500px;font-family:'Liberation Sans',sans-serif;font-weight:bold;font-size:72.700px;line-height:80px;color:#5b82a8;letter-spacing:-1.55px;white-space:nowrap">Camera</div>
<div class="abs" id="pro" style="left:380.500px;top:424px;font-family:'Noto Sans CJK SC','Liberation Sans',sans-serif;font-weight:100;font-size:68.200px;line-height:106px;color:#000;letter-spacing:-1px;white-space:nowrap;-webkit-text-stroke:.7px #fff">Pro</div>
</div>
</div>
<div id="ticks">
<div class="abs" style="left:311px;top:720px;width:597px;height:3px;background:repeating-linear-gradient(90deg,#242424 0,#242424 1px,transparent 1px,transparent 24.83px)"></div>
<div class="abs" style="left:311px;top:720px;width:1px;height:10px;background:#2a2a2a"></div>
<div class="abs" style="left:559.300px;top:720px;width:1px;height:10px;background:#2a2a2a"></div>
<div class="abs" style="left:807.600px;top:720px;width:1px;height:10px;background:#2a2a2a"></div>
<div class="abs" style="left:308px;top:123px;width:3px;height:597px;background:repeating-linear-gradient(0deg,#242424 0,#242424 1px,transparent 1px,transparent 24.83px)"></div>
<div class="abs" style="left:301px;top:719px;width:10px;height:1px;background:#2a2a2a"></div>
<div class="abs" style="left:301px;top:470.700px;width:10px;height:1px;background:#2a2a2a"></div>
<div class="abs" style="left:301px;top:222.400px;width:10px;height:1px;background:#2a2a2a"></div>
<div class="abs vr" style="left:291px;top:202.4px;width:3.5px;height:40px;overflow:hidden"><div class="abs" style="transform:rotate(-90deg);transform-origin:0 0;left:-9.5px;top:30.0px;font-size:12px;line-height:14px;color:#555;white-space:nowrap">500</div></div>
<div class="abs vr" style="left:291px;top:450.7px;width:3.5px;height:40px;overflow:hidden"><div class="abs" style="transform:rotate(-90deg);transform-origin:0 0;left:-9.5px;top:30.0px;font-size:12px;line-height:14px;color:#555;white-space:nowrap">250</div></div>
<div class="abs vr" style="left:291px;top:699.0px;width:3.5px;height:40px;overflow:hidden"><div class="abs" style="transform:rotate(-90deg);transform-origin:0 0;left:-9.5px;top:23.5px;font-size:12px;line-height:14px;color:#555;white-space:nowrap">0</div></div>
</div>
<div class="rl" style="left:311.500px">0</div>
<div class="rl" style="left:559.800px">250</div>
<div class="rl" style="left:808.500px">500</div>
<div id="bbar"></div>
<svg class="abs" style="left:298px;top:777px" width="15" height="15" viewBox="0 0 15 15"><g fill="#fff"><circle cx="7.500" cy="7.500" r="5.200"/><g id="gt"><rect x="6" y=".6" width="3" height="3" rx=".5"/><rect x="6" y="11.400" width="3" height="3" rx=".5"/></g><use href="#gt" transform="rotate(45 7.500 7.500)"/><use href="#gt" transform="rotate(90 7.500 7.500)"/><use href="#gt" transform="rotate(135 7.500 7.500)"/></g><circle cx="7.500" cy="7.500" r="2.300" fill="#000"/></svg>
<div class="bt" style="left:317px">Canvas</div>
<svg class="abs" style="left:367px;top:777px" width="15" height="15"><circle cx="7.500" cy="7.500" r="6.200" fill="none" stroke="#fff" stroke-width="1.400"/><circle cx="7.500" cy="7.500" r="3.700" fill="#fff"/></svg>
<div class="bt" style="left:386px">Snapping</div>
<svg class="abs" style="left:448px;top:777px" width="14" height="15"><g fill="#fff"><rect x="0" y="1" width="3.600" height="3.600" rx=".6"/><rect x="4.900" y="1" width="3.600" height="3.600" rx=".6"/><rect x="9.800" y="1" width="3.600" height="3.600" rx=".6"/><rect x="0" y="5.900" width="3.600" height="3.600" rx=".6"/><rect x="4.900" y="5.900" width="3.600" height="3.600" rx=".6"/><rect x="9.800" y="5.900" width="3.600" height="3.600" rx=".6"/><rect x="0" y="10.800" width="3.600" height="3.600" rx=".6"/><rect x="4.900" y="10.800" width="3.600" height="3.600" rx=".6"/><rect x="9.800" y="10.800" width="3.600" height="3.600" rx=".6"/></g></svg>
<div class="bt" style="left:466px">Grid</div>
<div class="bt" style="left:607px">Render Mode</div>
<div class="sel" style="left:680px;width:120px;padding-left:7px">Full<svg class="abs" style="right:5px;top:3px" width="8" height="12"><path d="M1.200 4.600l2.800-2.800 2.800 2.800M1.200 7.400l2.800 2.800 2.800-2.800" fill="none" stroke="#e0e0e0" stroke-width="1.200"/></svg></div>
<div class="bt" style="left:814px">Zoom</div>
<div class="sel" style="left:846.500px;width:63.500px;padding-left:7px"><span style="will-change:transform;display:inline-block">99.3 %</span><svg class="abs" style="right:4px;top:3px" width="8" height="12"><path d="M1.200 4.600l2.800-2.800 2.800 2.800M1.200 7.400l2.800 2.800 2.800-2.800" fill="none" stroke="#e0e0e0" stroke-width="1.200"/></svg></div>
<!--/CANVAS-->
<!--RIGHT-->
<div id="right"></div><div id="rightb"></div>
<div class="msg" style="left:920px;width:330px;top:364.8px">Please select objects in the canvas to change<br>properties or select style presets</div>
<div id="colors">
<div class="abs" style="left:4.300px;top:5px;font-size:12.500px;line-height:15px;color:#8b8b8b;white-space:nowrap;will-change:transform">Colors in this Canvas:</div>
<div class="abs" style="right:15.300px;top:7px;font-size:9.800px;line-height:12px;color:#e6e6e6;white-space:nowrap;will-change:transform">Sort by References</div>
<svg class="abs" style="left:317px;top:7px" width="8" height="12"><path d="M1.200 4.600l2.800-2.800 2.800 2.800M1.200 7.400l2.800 2.800 2.800-2.800" fill="none" stroke="#d8d8d8" stroke-width="1.200"/></svg>
<div class="sw" style="left:4px;top:25px;background:#fff"></div>
<div class="sw" style="left:44.700px;top:25px;background:#000;border:1px solid #2a2a2a"></div>
<div class="sw chk" style="left:85.400px;top:25px"><div class="abs" style="left:2px;right:2px;top:1px;height:3.500px;border-radius:2px;background:#f1c3e3"></div><div class="abs" style="left:2px;right:2px;bottom:1px;height:3.500px;border-radius:2px;background:#f1c3e3"></div></div>
<div class="sw chk" style="left:126.100px;top:25px"><div class="abs" style="left:2px;right:2px;top:1px;height:3.500px;border-radius:2px;background:#a9eaa9"></div><div class="abs" style="left:2px;right:2px;bottom:1px;height:3.500px;border-radius:2px;background:#a9eaa9"></div></div>
<div class="sw" style="left:166.800px;top:25px;background:#d9ffdb"></div>
<div class="sw" style="left:207.500px;top:25px;background:#a76b66"></div>
<div class="sw" style="left:248.200px;top:25px;background:#9bcfff"></div>
<div class="sw" style="left:288.900px;top:25px;background:#e9ffd1"></div>
<div class="sw" style="left:4px;top:65px;background:#432828;border:1px solid #5a3f3f"></div>
<div class="sw chk" style="left:44.700px;top:65px"><div class="abs" style="left:2px;right:2px;top:1px;height:3.500px;border-radius:2px;background:#3b7bd9"></div><div class="abs" style="left:2px;right:2px;bottom:1px;height:3.500px;border-radius:2px;background:#3b7bd9"></div></div>
<div class="sw" style="left:85.400px;top:65px;background:#2b2b2d;border:1px solid #454545"></div>
<div class="sw chk" style="left:126.100px;top:65px"><div class="abs" style="left:2px;right:2px;top:1px;height:3.500px;border-radius:2px;background:#000"></div><div class="abs" style="left:2px;right:2px;bottom:1px;height:3.500px;border-radius:2px;background:#000"></div></div>
<div class="sw" style="left:166.800px;top:65px;background:#5b83a8"></div>
<div class="sw" style="left:207.500px;top:65px;background:#a9d9ff"></div>
</div>
<!--/RIGHT-->
</div>
</body>
</html>
